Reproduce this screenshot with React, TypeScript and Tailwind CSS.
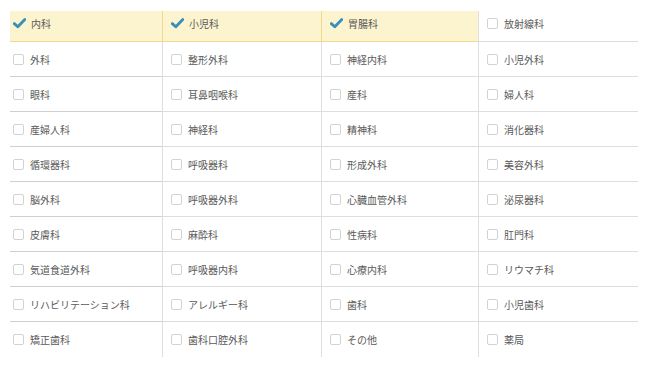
const departments: { name: string; checked?: boolean }[] = [
  { name: "内科", checked: true },
  { name: "小児科", checked: true },
  { name: "胃腸科", checked: true },
  { name: "放射線科" },
  { name: "外科" },
  { name: "整形外科" },
  { name: "神経内科" },
  { name: "小児外科" },
  { name: "眼科" },
  { name: "耳鼻咽喉科" },
  { name: "産科" },
  { name: "婦人科" },
  { name: "産婦人科" },
  { name: "神経科" },
  { name: "精神科" },
  { name: "消化器科" },
  { name: "循環器科" },
  { name: "呼吸器科" },
  { name: "形成外科" },
  { name: "美容外科" },
  { name: "脳外科" },
  { name: "呼吸器外科" },
  { name: "心臓血管外科" },
  { name: "泌尿器科" },
  { name: "皮膚科" },
  { name: "麻酔科" },
  { name: "性病科" },
  { name: "肛門科" },
  { name: "気道食道外科" },
  { name: "呼吸器内科" },
  { name: "心療内科" },
  { name: "リウマチ科" },
  { name: "リハビリテーション科" },
  { name: "アレルギー科" },
  { name: "歯科" },
  { name: "小児歯科" },
  { name: "矯正歯科" },
  { name: "歯科口腔外科" },
  { name: "その他" },
  { name: "薬局" },
]

function CheckMark() {
  return (
    <svg width="13" height="11" viewBox="0 0 13 11" className="shrink-0">
      <path d="M1.3 5.6 L4.8 8.8 L11.8 1.6" fill="none" stroke="#3790ba" strokeWidth="2.8" strokeLinecap="round" strokeLinejoin="round" />
    </svg>
  )
}

export default function App() {
  return (
    <main
      className="w-[656px] h-[378px] bg-white pt-[11px] px-[10px]"
      style={{ fontFamily: '"Noto Sans CJK JP", "Noto Sans", sans-serif' }}
    >
      <div className="grid grid-cols-[152px_159px_157px_160px] w-[628px]">
        {departments.map((d, i) => {
          const firstRow = i < 4
          const lastRow = i >= departments.length - 4
          const col = i % 4
          return (
            <div
              key={d.name}
              className={[
                "flex items-center gap-[6px] text-[10px] text-[#5a5a5a]",
                firstRow ? "h-[31px] pb-[5px]" : "h-[35px]",
                col > 0 ? "border-l border-[#dedede] pl-[8px]" : "pl-[3px]",
                lastRow ? "" : firstRow && d.checked ? "border-b border-[#efd88f]" : "border-b border-[#cfcfcf]",
                d.checked ? "bg-[#fcf3cf]" : "",
              ].join(" ")}
            >
              {d.checked ? (
                <CheckMark />
              ) : (
                <span className="w-[11px] h-[11px] shrink-0 rounded-[2px] border border-[#d2d2d2] bg-white" />
              )}
              <span className={d.checked ? "-ml-[1px]" : ""}>{d.name}</span>
            </div>
          )
        })}
      </div>
    </main>
  )
}
